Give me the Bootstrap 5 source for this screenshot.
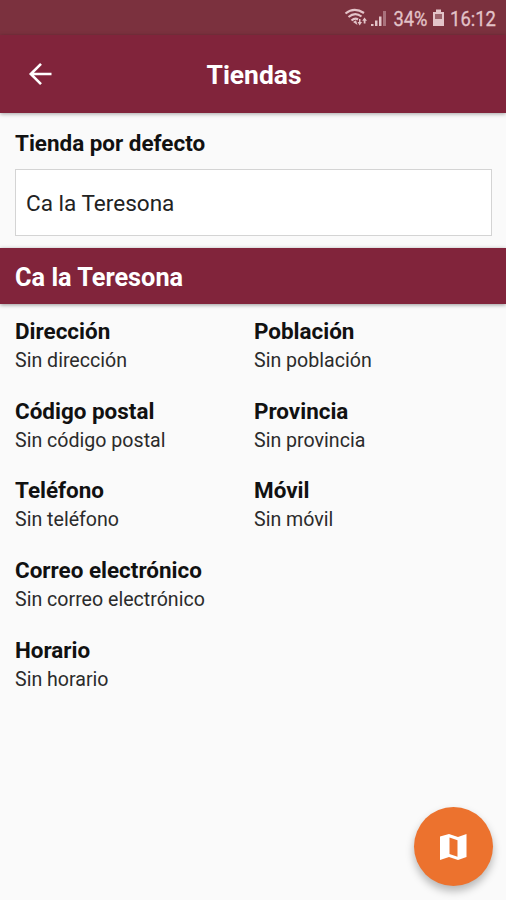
<!DOCTYPE html>
<html lang="es">
<head>
<meta charset="utf-8">
<meta name="viewport" content="width=device-width, initial-scale=1">
<title>Tiendas</title>
<link href="https://cdn.jsdelivr.net/npm/bootstrap@5.3.0/dist/css/bootstrap.min.css" rel="stylesheet">
<style>
  body { font-family: Roboto, sans-serif; background: #fafafa; color: #111; }
  .screen { height: 900px; overflow: hidden; }
  .status { height: 35px; background: #7b313e; padding-right: 4px; }
  .status svg { display: block; overflow: visible; }
  .topbar { height: 78px; background: #81243b; box-shadow: 0 1px 4px rgba(0,0,0,.35); }
  .topbar h1 { font-size: 26.4px; line-height: 30px; padding: 2px 0 0 2px; }
  .back { left: 27px; top: 26px; line-height: 0; }
  .default-shop { height: 135px; padding: 15px 14px 0 15px; }
  .field-label { font-size: 22.45px; line-height: 30px; }
  .picker { height: 67px; margin-top: 11px; padding: 3px 10px 0; background: #fff; border: 1px solid #d4d4d4; font-size: 22.55px; color: #222; }
  .section-bar { height: 56px; background: #81243b; padding: 5px 15px 0; font-size: 25.3px; box-shadow: 0 1px 4px rgba(0,0,0,.4); }
  .details { padding: 13px 15px 0; }
  .details .entry { height: 79.7px; }
  .details dt { font-size: 22.45px; line-height: 28px; }
  .details dd { font-size: 19.6px; line-height: 32px; color: #2b2b2b; }
  .details .col-6:nth-child(even) { padding-left: 1px; }
  .fab { right: 13px; bottom: 14px; width: 79px; height: 79px; background: #ec722e; box-shadow: 0 5px 9px rgba(0,0,0,.28); }
</style>
<script src="https://cdn.jsdelivr.net/npm/bootstrap@5.3.0/dist/js/bootstrap.bundle.min.js"></script>
</head>
<body>
<div class="screen position-relative d-flex flex-column">
  <div class="status d-flex justify-content-end align-items-center">
    <svg width="158" height="35" viewBox="0 0 158 35" fill="#e3c3c8" font-family="Roboto, sans-serif" font-size="20.5">
      <g fill="none" stroke="#e3c3c8" stroke-width="2.2">
        <path d="M1.500 13.500Q10 6.500 20 13"/>
        <path d="M4.500 17Q11 11.500 17.500 16.500"/>
        <path d="M7.500 20.500Q11 17.500 14 19.500"/>
      </g>
      <path d="M9 22l3-1.700 1.500 4.700zM13.500 22H15v-3h1.500v3h1.500l-2.300 3.500zM20.500 17.500l2.500 3.200h-1.500v2.800h-1.800v-2.800h-1.500z"/>
      <path d="M27 24h2.500v2H27zM31 20.500h2.500V26H31zM35 16.500h2.500V26H35z"/>
      <path opacity=".45" d="M39 11h3v15h-3z"/>
      <text x="49.500" y="26" textLength="34" lengthAdjust="spacingAndGlyphs" stroke="#e3c3c8" stroke-width=".3">34%</text>
      <path d="M92 9.500h5V12h3v14H89V12h3z"/>
      <path fill="#9c626b" d="M91 14h7v5h-7z"/>
      <text x="106" y="26" textLength="46" lengthAdjust="spacingAndGlyphs" stroke="#e3c3c8" stroke-width=".3">16:12</text>
    </svg>
  </div>
  <header class="topbar position-relative d-flex align-items-center justify-content-center text-white flex-shrink-0">
    <a href="#" class="back position-absolute" aria-label="Volver">
      <svg width="26" height="26" viewBox="0 0 26 26" fill="none" stroke="#fff" stroke-width="2.600"><path d="M24.500 13H4M14 2.800L3.800 13 14 23.200"/></svg>
    </a>
    <h1 class="fw-bold m-0">Tiendas</h1>
  </header>
  <section class="default-shop flex-shrink-0">
    <div class="field-label fw-bold">Tienda por defecto</div>
    <div class="picker d-flex align-items-center">Ca la Teresona</div>
  </section>
  <h2 class="section-bar d-flex align-items-center text-white fw-bold m-0 flex-shrink-0">Ca la Teresona</h2>
  <dl class="details row g-0 m-0">
    <div class="col-6 entry"><dt>Dirección</dt><dd class="m-0">Sin dirección</dd></div>
    <div class="col-6 entry"><dt>Población</dt><dd class="m-0">Sin población</dd></div>
    <div class="col-6 entry"><dt>Código postal</dt><dd class="m-0">Sin código postal</dd></div>
    <div class="col-6 entry"><dt>Provincia</dt><dd class="m-0">Sin provincia</dd></div>
    <div class="col-6 entry"><dt>Teléfono</dt><dd class="m-0">Sin teléfono</dd></div>
    <div class="col-6 entry"><dt>Móvil</dt><dd class="m-0">Sin móvil</dd></div>
    <div class="col-12 entry"><dt>Correo electrónico</dt><dd class="m-0">Sin correo electrónico</dd></div>
    <div class="col-12 entry"><dt>Horario</dt><dd class="m-0">Sin horario</dd></div>
  </dl>
  <button type="button" class="fab btn border-0 rounded-circle p-0 position-absolute d-flex align-items-center justify-content-center" aria-label="Mapa">
    <svg width="28" height="26" viewBox="0 0 28 26"><path fill="#fff" fill-rule="evenodd" d="M0 2.500L9 0l9 3 8.500-3v23L18 26l-9-3-9 3zM9.500 3.500v16.500l8 2.700V6.200z"/></svg>
  </button>
</div>
</body>
</html>
